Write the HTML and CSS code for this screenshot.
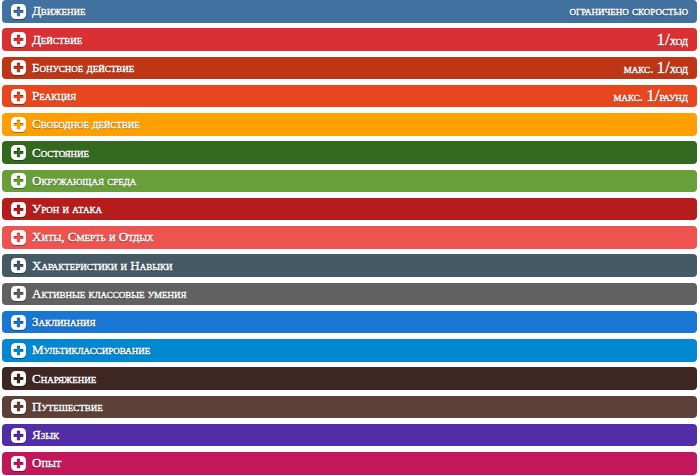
FILE: index.html
```html
<!DOCTYPE html>
<html lang="ru">
<head>
<meta charset="utf-8">
<title>Справочник</title>
<link rel="stylesheet" href="styles.css">
</head>
<body>
<svg width="0" height="0" class="defs">
  <defs>
    <symbol id="plus" viewBox="0 0 14 14">
      <path fill-rule="evenodd" d="M4.5 0H9.5Q14 0 14 4.5V9.5Q14 14 9.5 14H4.5Q0 14 0 9.5V4.5Q0 0 4.5 0ZM5.5 2.5V5.5H2.5V8.5H5.5V11.5H8.5V8.5H11.5V5.5H8.5V2.5Z"/>
    </symbol>
  </defs>
</svg>
<div class="list">
  <div class="bar c1"><svg class="ic"><use href="#plus"/></svg><span class="title">Движение</span><span class="note">ограничено скоростью</span></div>
  <div class="bar c2"><svg class="ic"><use href="#plus"/></svg><span class="title">Действие</span><span class="note"><b>1/</b>ход</span></div>
  <div class="bar c3"><svg class="ic"><use href="#plus"/></svg><span class="title">Бонусное действие</span><span class="note">макс. <b>1/</b>ход</span></div>
  <div class="bar c4"><svg class="ic"><use href="#plus"/></svg><span class="title">Реакция</span><span class="note">макс. <b>1/</b>раунд</span></div>
  <div class="bar c5"><svg class="ic"><use href="#plus"/></svg><span class="title">Свободное действие</span></div>
  <div class="bar c6"><svg class="ic"><use href="#plus"/></svg><span class="title">Состояние</span></div>
  <div class="bar c7"><svg class="ic"><use href="#plus"/></svg><span class="title">Окружающая среда</span></div>
  <div class="bar c8"><svg class="ic"><use href="#plus"/></svg><span class="title">Урон и атака</span></div>
  <div class="bar c9"><svg class="ic"><use href="#plus"/></svg><span class="title">Хиты, Смерть и Отдых</span></div>
  <div class="bar c10"><svg class="ic"><use href="#plus"/></svg><span class="title">Характеристики и Навыки</span></div>
  <div class="bar c11"><svg class="ic"><use href="#plus"/></svg><span class="title">Активные классовые умения</span></div>
  <div class="bar c12"><svg class="ic"><use href="#plus"/></svg><span class="title">Заклинания</span></div>
  <div class="bar c13"><svg class="ic"><use href="#plus"/></svg><span class="title">Мультиклассирование</span></div>
  <div class="bar c14"><svg class="ic"><use href="#plus"/></svg><span class="title">Снаряжение</span></div>
  <div class="bar c15"><svg class="ic"><use href="#plus"/></svg><span class="title">Путешествие</span></div>
  <div class="bar c16"><svg class="ic"><use href="#plus"/></svg><span class="title">Язык</span></div>
  <div class="bar c17"><svg class="ic"><use href="#plus"/></svg><span class="title">Опыт</span></div>
</div>
</body>
</html>
```
FILE: styles.css
```css
html, body {
  margin: 0;
  padding: 0;
  background: #ffffff;
}
.defs {
  position: absolute;
  width: 0;
  height: 0;
}
.list {
  display: flex;
  flex-direction: column;
  gap: 5.75px;
  padding: 0 3px 0 2px;
}
.bar {
  display: flex;
  align-items: center;
  height: 22.5px;
  border-radius: 4px;
  padding: 0 9px 0 9px;
  color: #fff;
  font-family: "Liberation Serif", "DejaVu Serif", serif;
  font-variant: small-caps;
  font-weight: normal;
  font-size: 13px;
  text-shadow: 0 1px 1px rgba(0,0,0,0.6), 0 0 1px rgba(0,0,0,0.4);
  box-sizing: border-box;
}
.ic {
  width: 15px;
  height: 15px;
  fill: #fff;
  flex: none;
  margin-right: 6px;
  filter: drop-shadow(0 1px 0.5px rgba(0,0,0,0.35));
}
.title {
  flex: 1;
  white-space: nowrap;
  -webkit-text-stroke: 0.4px #fff;
}
.note {
  white-space: nowrap;
  font-size: 12.8px;
  -webkit-text-stroke: 0.4px #fff;
}
.note b {
  font-weight: normal;
  font-size: 17px;
}
.c1 { background: #41729f; }
.c2 { background: #d93033; }
.c3 { background: #bf3616; }
.c4 { background: #e8461c; }
.c5 { background: #ffa000; }
.c6 { background: #33691e; }
.c7 { background: #689f38; }
.c8 { background: #b71c1c; }
.c9 { background: #ef5350; }
.c10 { background: #455a64; }
.c11 { background: #616161; }
.c12 { background: #1976d2; }
.c13 { background: #0288d1; }
.c14 { background: #3e2723; }
.c15 { background: #5d4037; }
.c16 { background: #512da8; }
.c17 { background: #c2185b; }
```
